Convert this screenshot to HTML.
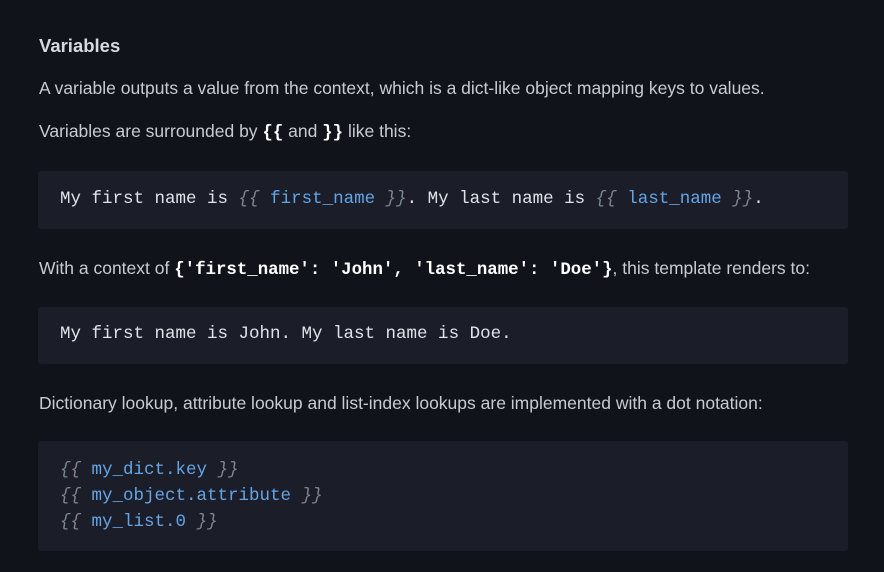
<!DOCTYPE html>
<html><head><meta charset="utf-8"><style>
html,body{margin:0;padding:0;background:#11131a;width:884px;height:572px;overflow:hidden}
body{font-family:"Liberation Sans",sans-serif;color:#c8cbd2;font-size:17.5px}
.a{position:absolute;left:39px;white-space:nowrap}
h2{position:absolute;left:39px;top:35px;margin:0;font-size:18.5px;font-weight:bold;color:#d6d9df}
.box{position:absolute;left:38px;width:810px;background:#1b1e28;border-radius:3px}
.m{font-family:"Liberation Mono",monospace;font-size:17.5px;color:#dfe2e8;white-space:pre;position:absolute;left:22px}
.b{color:#64a4e6}.g{color:#7d8590;font-style:italic}
code{font-family:"Liberation Mono",monospace;font-weight:bold;color:#fff;font-size:17.4px}
</style></head><body>
<h2>Variables</h2>
<div class="a" style="top:78px">A variable outputs a value from the context, which is a dict-like object mapping keys to values.</div>
<div class="a" style="top:121px">Variables are surrounded by <code>{{</code> and <code>}}</code> like this:</div>
<div class="box" style="top:171px;height:58px"><div class="m" style="top:18px">My first name is <span class="g">{{</span> <span class="b">first_name</span> <span class="g">}}</span>. My last name is <span class="g">{{</span> <span class="b">last_name</span> <span class="g">}}</span>.</div></div>
<div class="a" style="top:258px">With a context of <code>{'first_name': 'John', 'last_name': 'Doe'}</code>, this template renders to:</div>
<div class="box" style="top:307px;height:57px"><div class="m" style="top:17px">My first name is John. My last name is Doe.</div></div>
<div class="a" style="top:393px">Dictionary lookup, attribute lookup and list-index lookups are implemented with a dot notation:</div>
<div class="box" style="top:441px;height:110px"><div class="m" style="top:16px;line-height:26px"><span class="g">{{</span> <span class="b">my_dict.key</span> <span class="g">}}</span>
<span class="g">{{</span> <span class="b">my_object.attribute</span> <span class="g">}}</span>
<span class="g">{{</span> <span class="b">my_list.0</span> <span class="g">}}</span></div></div>
</body></html>
